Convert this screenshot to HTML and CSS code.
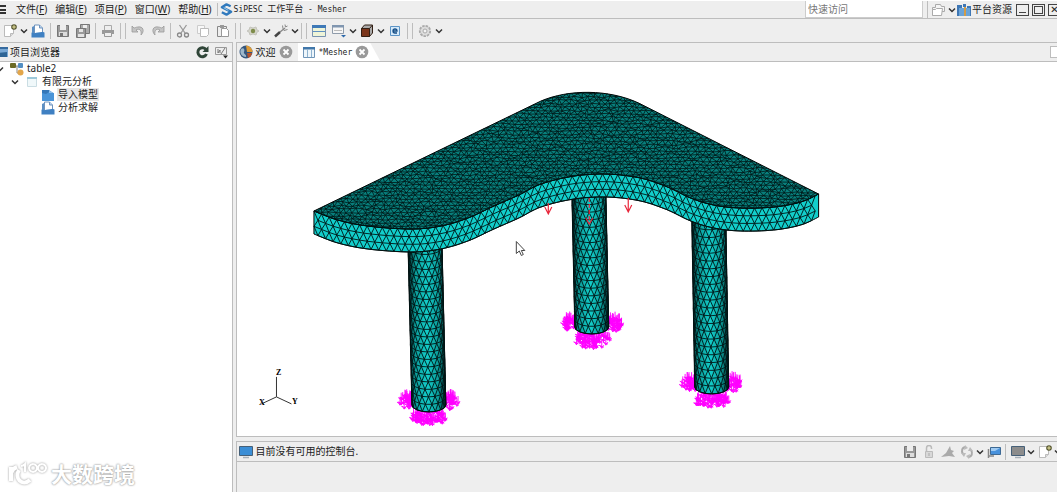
FILE: index.html
```html
<!DOCTYPE html>
<html lang="zh-CN">
<head>
  <meta charset="UTF-8">
  <meta name="viewport" content="width=device-width, initial-scale=1.0">
  <title>SiPESC 工作平台 - Mesher</title>
  <link rel="stylesheet" href="styles.css">
</head>
<body>

  <!-- Shared icons -->
  <svg class="sprite" aria-hidden="true">
    <symbol id="i-chev" viewBox="0 0 8 8"><path d="M1 2.500 4 5.500l3-3" fill="none" stroke="#333" stroke-width="1.500"/></symbol>
    <symbol id="i-new" viewBox="0 0 14 14"><path d="M1.500 1.500h9v8l-3 3h-6z" fill="#fff" stroke="#bbb"/><path d="M7.500 12.500v-3h3" fill="#ddd" stroke="#bbb"/><circle cx="11" cy="3" r="2.800" fill="#55552f"/><path d="M11 1.200v3.600M9.200 3h3.600" stroke="#e8e3a0"/></symbol>
    <symbol id="i-open" viewBox="0 0 14 14"><path d="M1 3l2-1v9H1z" fill="#5b8fc4"/><path d="M3.500 1h5l3 3v6h-8z" fill="#fff" stroke="#6f93bd"/><path d="M8.500 1v3h3" fill="#b9d2ee" stroke="#6f93bd"/><path d="M.5 8.500c4 2 8-1.500 13 0v5H.5z" fill="#3f80c2"/></symbol>
    <symbol id="i-folder" viewBox="0 0 14 14"><path d="M1 2h7l4 3v3H1z" fill="#3577b8"/><path d="M1 5l4 1 3-2 5 1v8H1z" fill="#4a94d8"/><path d="M8 2v3h4" fill="#8fc0ec"/></symbol>
    <symbol id="i-save" viewBox="0 0 14 14"><path d="M1.500 1.500h11v11h-11z" fill="#999" stroke="#777"/><path d="M4 1h6v5H4z" fill="#eee"/><path d="M3 8h8v4H3z" fill="#ddd"/><path d="M4 9h3v3H4z" fill="#777"/></symbol>
    <symbol id="i-saveall" viewBox="0 0 14 14"><path d="M4.500.5h9v9h-9z" fill="#aaa" stroke="#777"/><path d="M7 1h4v3H7z" fill="#eee"/><path d="M.5 4.500h9v9h-9z" fill="#999" stroke="#777"/><path d="M3 5h4v3H3zM2 10h6v3H2z" fill="#e4e4e4"/></symbol>
    <symbol id="i-print" viewBox="0 0 14 14"><path d="M3.500 1.500h7v5h-7z" fill="#eee" stroke="#aaa"/><path d="M1 6h12v4H1z" fill="#999"/><path d="M3.500 8.500h7v4h-7z" fill="#eee" stroke="#999"/></symbol>
    <symbol id="i-undo" viewBox="0 0 14 14"><path d="M1 2v6h6L5 6c3-2 6 0 5 5 4-4 2-9-3-8-2 0-3 1-4 1z" fill="#c4c4c4" stroke="#999" stroke-width=".8"/></symbol>
    <symbol id="i-cut" viewBox="0 0 14 14"><path d="M3.500 1 9 9M10.500 1 5 9" stroke="#999" stroke-width="1.300"/><circle cx="3.500" cy="11" r="2" fill="none" stroke="#888" stroke-width="1.300"/><circle cx="10.500" cy="11" r="2" fill="none" stroke="#888" stroke-width="1.300"/></symbol>
    <symbol id="i-copy" viewBox="0 0 14 14"><path d="M1.500 1.500h7v8h-7z" fill="#f8f8f8" stroke="#ccc"/><path d="M4.500 4.500h8v6l-2 2h-6z" fill="#fff" stroke="#bbb"/></symbol>
    <symbol id="i-paste" viewBox="0 0 14 14"><path d="M1.500 2.500h9v10h-9z" fill="#eee" stroke="#888"/><path d="M4 1h4v3H4z" fill="#999"/><path d="M5.500 4.500h5l2 2v6h-7z" fill="#fff" stroke="#999"/></symbol>
    <symbol id="i-eye" viewBox="0 0 14 14"><path d="M1 7l2-1 1-3 3 1 3-1 1 3 2 1-2 1-1 3-3-1-3 1-1-3z" fill="#d4d5c9" stroke="#c4c4bd"/><circle cx="7" cy="7" r="2.200" fill="#7e8c4a"/></symbol>
    <symbol id="i-wrench" viewBox="0 0 14 14"><path d="M1 12.500 6 8" stroke="#444" stroke-width="2.500"/><path d="M6 8l5-4" stroke="#888" stroke-width="1.500"/><path d="M8.500 1.500l.5 3 1 2 3.500-1M11 .5l.5 2.500 2-1" fill="none" stroke="#888"/></symbol>
    <symbol id="i-form" viewBox="0 0 14 14"><path d="M.5 1.500h13v11H.5z" fill="#eef4d8" stroke="#7893b0"/><path d="M0 1h14v3H0z" fill="#3e79b7"/><path d="M1 7.500h12" stroke="#5f90c4"/></symbol>
    <symbol id="i-form2" viewBox="0 0 14 14"><path d="M.5 1.500h11v8H.5z" fill="#f6f6f6" stroke="#8f9cab"/><path d="M0 1h12v2.500H0z" fill="#8096b0"/><path d="M2 6.500h8" stroke="#bbb"/><path d="M9 11h5l-2.500 2.500z" fill="#2c68aa"/></symbol>
    <symbol id="i-box" viewBox="0 0 14 14"><path d="M1.500 4.500 4.500 1h8v8l-3 3.500z" fill="#aaa" stroke="#332015"/><path d="M1.500 4.500h8v8h-8z" fill="#7b351b" stroke="#332015"/><path d="M9.500 4.500 12.500 1" stroke="#332015"/></symbol>
    <symbol id="i-e" viewBox="0 0 14 14"><path d="M2.500 2.500h9v9h-9z" fill="#d6eafa" stroke="#5c94c6"/><path d="M9 9H7a2 2 0 1 1 2-2H5.500" fill="none" stroke="#174f87" stroke-width="1.300"/></symbol>
    <symbol id="i-gear" viewBox="0 0 14 14"><circle cx="7" cy="7" r="5.200" fill="#ddd" stroke="#aaa" stroke-width="1.800" stroke-dasharray="2.500 1"/><circle cx="7" cy="7" r="2" fill="#f4f4f4" stroke="#aaa"/></symbol>
    <symbol id="i-sync" viewBox="0 0 14 14"><path d="M11 4.500A4.500 4.500 0 1 0 11.500 9" fill="none" stroke="#2f4538" stroke-width="3"/><path d="M13.500 1v6H7.500z" fill="#2f4538"/></symbol>
    <symbol id="i-link" viewBox="0 0 14 14"><path d="M.5 2.500h11v7H.5z" fill="#eee" stroke="#999"/><path d="M3 4v4M3 8l2-3v3M6 9l4-6" fill="none" stroke="#777"/><path d="M8 10.500h5l-2.500 3z" fill="#222"/></symbol>
    <symbol id="i-nav" viewBox="0 0 14 14"><path d="M0 2h12v10H0z" fill="#79a8d4"/><path d="M0 2h12v2H0z" fill="#356a9f"/><path d="M1 8l10-1v5H0z" fill="#2f6595"/></symbol>
    <symbol id="i-tree" viewBox="0 0 14 14"><path d="M5 4h5M7 4v7h3" fill="none" stroke="#888"/><rect x="0" y="1" width="6" height="5" rx="1" fill="#6d6b25"/><rect x="8" y="1" width="5" height="5" rx="1" fill="#548fc3"/><circle cx="10.500" cy="10.500" r="3" fill="#e3a64a"/></symbol>
    <symbol id="i-page" viewBox="0 0 14 14"><path d="M2.500 2.500h9v9h-9z" fill="#f0f8fa" stroke="#cadde3"/><path d="M2 2h10v2H2z" fill="#9cc8da"/></symbol>
    <symbol id="i-globe" viewBox="0 0 14 14"><circle cx="7" cy="7" r="6.500" fill="#35577e"/><path d="M7 .5a6.500 6.500 0 0 1 6.500 6.500H8z" fill="#de9b35"/><path d="M2 4c3-2 4 1 3 3s3 2 2 5C3 12 0 8 2 4z" fill="#9eb7ca"/><path d="M8 8h5a6 6 0 0 1-4 5z" fill="#b5532f"/></symbol>
    <symbol id="i-table" viewBox="0 0 14 14"><path d="M1.500 2.500h11v10h-11z" fill="#eef6fb" stroke="#7196b8"/><path d="M1 2h12v2.500H1z" fill="#4177aa"/><path d="M5.500 4v8M9.500 4v8" stroke="#8eb2cf"/></symbol>
    <symbol id="i-close" viewBox="0 0 14 14"><circle cx="7" cy="7" r="6.300" fill="#999"/><path d="M4.500 4.500l5 5M9.500 4.500l-5 5" stroke="#fff" stroke-width="1.800"/></symbol>
    <symbol id="i-monitor" viewBox="0 0 14 14"><path d="M.5 1.500h13v9H.5z" fill="currentColor" stroke="#466078"/><path d="M4 12.500h6" stroke="#a8b0b8" stroke-width="1.500"/></symbol>
    <symbol id="i-lock" viewBox="0 0 14 14"><path d="M4.500 6V3a2.500 2.500 0 0 1 5 0v1" fill="none" stroke="#bbb" stroke-width="1.500"/><path d="M3.500 6.500h7v6h-7z" fill="#d8d8d8" stroke="#bbb"/><path d="M7 8v3" stroke="#aaa"/></symbol>
    <symbol id="i-pin" viewBox="0 0 14 14"><path d="M0 12 5 8l4-7 1 4 3 1-2 2 3 4-6-1z" fill="#aaa"/></symbol>
    <symbol id="i-swap" viewBox="0 0 14 14"><path d="M6 2C2 2 1 6 3 9M8 12c4 0 5-4 3-7" fill="none" stroke="#aaa" stroke-width="2"/><path d="M5 0l3 3-4 2zM9 14l-3-3 4-2zM1 8h5l-2 4zM13 6H8l2-4z" fill="#bbb"/></symbol>
    <symbol id="i-show" viewBox="0 0 14 14"><path d="M3.500 2.500h10v7h-10z" fill="#4791dc" stroke="#3d6994"/><path d="M1.500 4v9M1 11h6" stroke="#888" stroke-width="1.500"/><path d="M4 3h9l-5 3H4z" fill="#9fcaf2"/></symbol>
    <symbol id="i-persp" viewBox="0 0 14 14"><path d="M1.500 12.500v-8h3V1.500h5l1 2h3v5h-3" fill="#f4f4f4" stroke="#aaa"/><path d="M1.500 12.500v-6h3l1-1h6l-1 7z" fill="#fff" stroke="#aaa"/></symbol>
    <symbol id="i-res" viewBox="0 0 14 14"><path d="M0 2h5v11H0zM6 1h3v3H6zM10 3h4v10h-4z" fill="#3e77b5"/><path d="M2 5h11v8H2z" fill="#6ba4d8"/><path d="M7 4h2v9H7z" fill="#d39c46"/></symbol>
    <symbol id="i-logo" viewBox="0 0 14 14"><path d="M11.500 3.500 7 1.500 2 4.500 12 9.500 7 12.500 2 10" fill="none" stroke="#2f79bd" stroke-width="2.600" stroke-linejoin="round"/><path d="M4 5l5 3" stroke="#9fd0ee"/></symbol>
  </svg>

  <header class="menubar">
    <button class="burger" aria-label="菜单"></button>
    <nav class="menus">
      <button>文件(<u>F</u>)</button>
      <button>编辑(<u>E</u>)</button>
      <button>项目(<u>P</u>)</button>
      <button>窗口(<u>W</u>)</button>
      <button>帮助(<u>H</u>)</button>
    </nav>
    <div class="title">
      <svg class="icon"><use href="#i-logo"/></svg>
      <h1>SiPESC <span>工作平台</span> - Mesher</h1>
    </div>
    <input class="quick" type="text" placeholder="快速访问" aria-label="快速访问">
    <div class="perspective">
      <button class="tool" aria-label="打开透视图"><svg class="icon"><use href="#i-persp"/></svg></button>
      <button class="drop" aria-label="更多透视图"><svg><use href="#i-chev"/></svg></button>
      <button class="res"><svg class="icon"><use href="#i-res"/></svg>平台资源</button>
    </div>
    <div class="winbtns">
      <button class="min" aria-label="最小化"></button>
      <button class="max" aria-label="最大化"></button>
      <button class="cls" aria-label="关闭"></button>
    </div>
  </header>

  <div class="toolbar">
    <button class="tool" aria-label="新建"><svg class="icon"><use href="#i-new"/></svg></button>
    <button class="drop" aria-label="新建菜单"><svg><use href="#i-chev"/></svg></button>
    <button class="tool" aria-label="打开"><svg class="icon"><use href="#i-open"/></svg></button>
    <i class="sep"></i>
    <button class="tool" aria-label="保存"><svg class="icon"><use href="#i-save"/></svg></button>
    <button class="tool" aria-label="全部保存"><svg class="icon"><use href="#i-saveall"/></svg></button>
    <i class="sep"></i>
    <button class="tool" aria-label="打印"><svg class="icon"><use href="#i-print"/></svg></button>
    <i class="sep double"></i>
    <button class="tool" aria-label="撤销"><svg class="icon"><use href="#i-undo"/></svg></button>
    <button class="tool" aria-label="重做"><svg class="icon flip"><use href="#i-undo"/></svg></button>
    <i class="sep"></i>
    <button class="tool" aria-label="剪切"><svg class="icon"><use href="#i-cut"/></svg></button>
    <button class="tool" aria-label="复制"><svg class="icon"><use href="#i-copy"/></svg></button>
    <button class="tool" aria-label="粘贴"><svg class="icon"><use href="#i-paste"/></svg></button>
    <i class="sep double"></i>
    <button class="tool" aria-label="显示"><svg class="icon"><use href="#i-eye"/></svg></button>
    <button class="drop" aria-label="显示菜单"><svg><use href="#i-chev"/></svg></button>
    <button class="tool" aria-label="工具"><svg class="icon"><use href="#i-wrench"/></svg></button>
    <button class="drop" aria-label="工具菜单"><svg><use href="#i-chev"/></svg></button>
    <i class="sep double"></i>
    <button class="tool" aria-label="表单"><svg class="icon"><use href="#i-form"/></svg></button>
    <button class="tool" aria-label="视图"><svg class="icon"><use href="#i-form2"/></svg></button>
    <button class="drop" aria-label="视图菜单"><svg><use href="#i-chev"/></svg></button>
    <button class="tool" aria-label="模型"><svg class="icon"><use href="#i-box"/></svg></button>
    <button class="drop" aria-label="模型菜单"><svg><use href="#i-chev"/></svg></button>
    <button class="tool" aria-label="单元"><svg class="icon"><use href="#i-e"/></svg></button>
    <i class="sep double"></i>
    <button class="tool" aria-label="设置"><svg class="icon"><use href="#i-gear"/></svg></button>
    <button class="drop" aria-label="设置菜单"><svg><use href="#i-chev"/></svg></button>
  </div>

  <main class="workbench">
    <aside class="explorer">
      <div class="explorer-head">
        <svg class="icon"><use href="#i-nav"/></svg>
        <h2>项目浏览器</h2>
        <button class="tool" aria-label="刷新"><svg class="icon"><use href="#i-sync"/></svg></button>
        <button class="tool" aria-label="链接"><svg class="icon"><use href="#i-link"/></svg></button>
      </div>
      <ul class="tree">
        <li>
          <div class="node root"><svg class="arrow"><use href="#i-chev"/></svg><svg class="icon"><use href="#i-tree"/></svg><span>table2</span></div>
          <ul>
            <li>
              <div class="node"><svg class="arrow"><use href="#i-chev"/></svg><svg class="icon"><use href="#i-page"/></svg><span>有限元分析</span></div>
              <ul>
                <li><div class="node leaf"><svg class="icon"><use href="#i-folder"/></svg><span class="selected">导入模型</span></div></li>
                <li><div class="node leaf"><svg class="icon"><use href="#i-open"/></svg><span>分析求解</span></div></li>
              </ul>
            </li>
          </ul>
        </li>
      </ul>
      <div class="watermark">
        <svg viewBox="0 0 40 28"><path d="M3 7v14M3 13c1-3 3-5 6-6M11 10c-5 8 3 17 11 10"/><path class="thin" d="M13 6c2 0 3-1 4-2v8M25 4a4 4 0 1 0 .1 0M34 4a4 4 0 1 0 .1 0"/></svg>
        <span>大数跨境</span>
      </div>
    </aside>

    <section class="right">
      <div class="editor">
        <div class="tabs">
          <button class="tab"><svg class="icon"><use href="#i-globe"/></svg><span>欢迎</span><svg class="icon"><use href="#i-close"/></svg></button>
          <button class="tab active"><svg class="icon"><use href="#i-table"/></svg><span class="mono">*Mesher</span><svg class="icon"><use href="#i-close"/></svg></button>
          <button class="restore" aria-label="还原"></button>
        </div>
        <svg class="scene" viewBox="236 62 821 374" role="img" aria-label="桌子有限元网格">
          <defs>
            <linearGradient id="legFill">
              <stop offset="0" stop-color="#022"/>
              <stop offset=".2" stop-color="#0b9c99"/>
              <stop offset=".5" stop-color="#13ccc9"/>
              <stop offset=".8" stop-color="#0b9c99"/>
              <stop offset="1" stop-color="#022"/>
            </linearGradient>
            <clipPath id="topClip"><path id="topClipPath"/></clipPath>
          </defs>
          <g id="legs"></g>
          <g id="plate"></g>
          <g class="load">
            <path d="M547.500 203v10m-3.500-6l3.500 7 3.500-7M627.500 198v13m-3.500-6l3.500 7 3.500-7"/>
            <path d="M588.500 220v-22" stroke-dasharray="4 2"/>
            <path d="M585 218l3.500 6 3.500-6"/>
          </g>
          <g class="axes">
            <path d="M275.500 377v20l-15 7m15-7 15 7"/>
            <text x="275" y="375">Z</text>
            <text x="258" y="405">X</text>
            <text x="291" y="404">Y</text>
          </g>
          <path class="cursor" d="M515.500 241.500v12l3-2.500 2 4.500 2-1-2-4h3.500z"/>
        </svg>
      </div>

      <div class="console">
        <div class="console-head">
          <svg class="icon blue"><use href="#i-monitor"/></svg>
          <span class="message">目前没有可用的控制台.</span>
          <button class="tool" aria-label="保存日志"><svg class="icon"><use href="#i-save"/></svg></button>
          <button class="tool" aria-label="锁定"><svg class="icon"><use href="#i-lock"/></svg></button>
          <button class="tool" aria-label="固定"><svg class="icon"><use href="#i-pin"/></svg></button>
          <button class="tool" aria-label="切换"><svg class="icon"><use href="#i-swap"/></svg></button>
          <button class="drop" aria-label="切换菜单"><svg><use href="#i-chev"/></svg></button>
          <button class="tool" aria-label="显示控制台"><svg class="icon"><use href="#i-show"/></svg></button>
          <i class="sep"></i>
          <button class="tool" aria-label="控制台"><svg class="icon grey"><use href="#i-monitor"/></svg></button>
          <button class="drop" aria-label="控制台菜单"><svg><use href="#i-chev"/></svg></button>
          <button class="tool" aria-label="新建控制台"><svg class="icon"><use href="#i-new"/></svg></button>
          <button class="drop" aria-label="新建控制台菜单"><svg><use href="#i-chev"/></svg></button>
        </div>
      </div>
    </section>
  </main>

  <script src="mesh.js"></script>
</body>
</html>
```
FILE: styles.css
```css
:root {
  --bg: #eeeeee;
  --line: #bdbdbd;
  --text: #222222;
}

* {
  box-sizing: border-box;
}

body {
  margin: 0;
  height: 100vh;
  display: flex;
  flex-direction: column;
  overflow: hidden;
  background: var(--bg);
  color: var(--text);
  font-family: "Noto Sans", "Noto Sans CJK SC", sans-serif;
  font-size: 10px;
  line-height: 13px;
}

button {
  display: flex;
  align-items: center;
  justify-content: center;
  flex: none;
  margin: 0;
  padding: 0;
  border: 0;
  background: none;
  color: inherit;
  font: inherit;
}

h1,
h2 {
  margin: 0;
  font-size: 10px;
  font-weight: normal;
  white-space: nowrap;
}

.sprite {
  display: none;
}

.icon {
  width: 14px;
  height: 14px;
  flex: none;
}

.flip {
  transform: scaleX(-1);
}

.blue {
  color: #3b8ed6;
}

.grey {
  color: #8c8c8c;
}

.tool {
  width: 20px;
  height: 18px;
}

.drop {
  width: 8px;
  height: 18px;
}

.drop svg,
.arrow {
  width: 8px;
  height: 8px;
  flex: none;
}

.sep {
  width: 5px;
  height: 16px;
  flex: none;
  background: linear-gradient(var(--line), var(--line)) center / 1px 100% no-repeat;
}

.sep.double {
  width: 10px;
  background: none;
}

.sep.double::before {
  content: "";
  display: block;
  width: 4px;
  height: 16px;
  margin: 0 auto;
  border: solid var(--line);
  border-width: 0 1px;
}

/* Menu bar */
.menubar {
  display: flex;
  align-items: center;
  height: 19px;
  flex: none;
  border-top: 1px solid #fff;
  border-bottom: 1px solid var(--line);
}

.burger {
  width: 6px;
  height: 9px;
  border: solid #333;
  border-width: 2px 0;
  background: linear-gradient(#333, #333) center / 100% 2px no-repeat;
}

.menus {
  display: flex;
  gap: 8px;
  margin-left: 10px;
  padding-right: 5px;
  border-right: 1px solid var(--line);
}

.title {
  display: flex;
  align-items: center;
  flex: 1;
  padding-left: 2px;
}

.title .icon {
  width: 13px;
  height: 13px;
}

.title h1 {
  padding-left: 1px;
  font-family: "DejaVu Sans Mono", "Noto Sans CJK SC", monospace;
  font-size: 8px;
}

.title h1 span {
  font-size: 9px;
}

.quick {
  width: 118px;
  height: 17px;
  padding: 0 2px;
  border: 1px solid #ccc;
  border-top: 0;
  background: #fff;
  font: inherit;
}

.quick::placeholder {
  color: #777;
}

.perspective {
  display: flex;
  align-items: center;
  margin-left: 4px;
  border-left: 1px solid var(--line);
}

.res {
  gap: 1px;
  padding-left: 1px;
}

.winbtns {
  display: flex;
  gap: 3px;
  margin: 0 -4px 0 4px;
}

.winbtns button {
  width: 13px;
  height: 12px;
  border: 1px solid #444;
}

.min::before {
  content: "";
  width: 7px;
  height: 6px;
  border-bottom: 1px solid #444;
}

.max::before {
  content: "";
  width: 7px;
  height: 6px;
  border: 1px solid #444;
}

.cls::before {
  content: "✕";
  font-family: "DejaVu Sans", sans-serif;
  font-weight: bold;
}

/* Toolbar */
.toolbar {
  display: flex;
  align-items: center;
  height: 23px;
  flex: none;
}

/* Panels */
.workbench {
  display: flex;
  flex: 1;
  gap: 3px;
  min-height: 0;
}

.explorer {
  position: relative;
  width: 22%;
  flex: none;
  border: solid var(--line);
  border-width: 1px 1px 0 0;
  background: #fff;
}

.explorer-head {
  display: flex;
  align-items: center;
  height: 19px;
  border-bottom: 1px solid var(--line);
  background: var(--bg);
}

.explorer-head > .icon {
  margin-left: -4px;
}

.explorer-head h2 {
  flex: 1;
}

.tree,
.tree ul {
  margin: 0;
  padding: 0;
  list-style: none;
}

.tree ul {
  padding-left: 11px;
}

.tree ul ul {
  padding-left: 30px;
}

.node {
  display: flex;
  align-items: center;
  gap: 6px;
  height: 13px;
}

.node.root {
  margin-left: -4px;
}

.node .icon {
  margin-right: -4px;
}

.node span {
  padding: 0 1px;
}

.node .selected {
  background: #e6e6e6;
}

.watermark {
  position: absolute;
  left: 8px;
  bottom: 4px;
  display: flex;
  align-items: center;
  gap: 3px;
  color: #fff;
  font-size: 21px;
  font-weight: bold;
  line-height: 28px;
  text-shadow: 0 0 2px #999, 0 0 2px #aaa;
}

.watermark svg {
  width: 40px;
  height: 28px;
  fill: none;
  stroke: #fff;
  stroke-width: 4;
  filter: drop-shadow(0 0 1px #999);
}

.watermark .thin {
  stroke-width: 2;
}

.right {
  display: flex;
  flex: 1;
  flex-direction: column;
  gap: 4px;
  min-width: 0;
}

.editor {
  display: flex;
  flex: 1;
  flex-direction: column;
  min-height: 0;
  border: 1px solid var(--line);
  border-right: 0;
  background: #fff;
}

.tabs {
  display: flex;
  height: 19px;
  flex: none;
  border-bottom: 1px solid var(--line);
  background: var(--bg);
}

.tab {
  gap: 3px;
  padding: 0 5px 0 2px;
}

.tab.active {
  padding: 0 11px 0 4px;
  background: #fff;
  clip-path: polygon(0 0, 88% 0, 100% 100%, 0 100%);
}

.mono {
  font-family: "DejaVu Sans Mono", monospace;
  font-size: 8px;
}

.restore {
  width: 10px;
  height: 12px;
  margin: 3px -3px 0 auto;
  border: 1px solid var(--line);
  background: #fff;
}

.console {
  height: 51px;
  flex: none;
  border: solid var(--line);
  border-width: 1px 0 0 1px;
}

.console-head {
  display: flex;
  align-items: center;
  height: 20px;
  margin-right: -5px;
  padding-left: 2px;
  border-bottom: 1px solid var(--line);
}

.console-head .tool {
  width: 19px;
}

.message {
  flex: 1;
  padding-left: 3px;
}

/* Model view */
.scene {
  flex: 1;
  width: 100%;
  min-height: 0;
}

.plate-top {
  fill: #087f7c;
  stroke: #000;
}

.plate-side {
  fill: #12cecb;
  stroke: #000;
}

.mesh {
  fill: none;
  stroke: #001414;
  stroke-width: 0.9;
}

.mesh-top {
  stroke-width: 0.8;
}

.leg {
  fill: url(#legFill);
  stroke: #000;
}

.support {
  fill: none;
  stroke: #ff00ff;
  stroke-width: 0.9;
}

.load path {
  fill: none;
  stroke: #e8283c;
  stroke-width: 1.2;
}

.axes path {
  fill: none;
  stroke: #333;
}

.axes text {
  font-family: "Liberation Serif", serif;
  font-size: 8px;
  font-weight: bold;
}

.cursor {
  fill: #fff;
  stroke: #444;
}
```
FILE: mesh.js
```js
const NS = "http://www.w3.org/2000/svg";
const plate = document.getElementById("plate");
const legs = document.getElementById("legs");

// Front edge of the table top, left to right
const front = [
  [313, 211], [337, 220], [367, 226], [410, 229], [440, 226], [467, 218],
  [493, 206], [518, 195], [540, 184], [573, 176], [607, 174], [640, 178],
  [667, 187], [690, 198], [713, 205], [740, 208], [773, 207], [800, 202], [818, 194]
];
const back = "L818 194L638 103C608 89 568 89 540 101L313 211Z";
const thickness = 23;

let seed = 7;
function rand() {
  seed = (seed * 16807) % 2147483647;
  return seed / 2147483647;
}

function jitter(n) {
  return (rand() - 0.5) * n;
}

function add(parent, d, cls) {
  const path = document.createElementNS(NS, "path");
  path.setAttribute("d", d);
  path.setAttribute("class", cls);
  parent.appendChild(path);
}

function pt(p) {
  return p[0].toFixed(1) + " " + p[1].toFixed(1);
}

// Catmull-Rom through the front points
function sample(steps) {
  const out = [];
  for (let i = 0; i < front.length - 1; i++) {
    const p = [front[Math.max(i - 1, 0)], front[i], front[i + 1], front[Math.min(i + 2, front.length - 1)]];
    for (let s = 0; s < steps; s++) {
      const t = s / steps;
      out.push([0, 1].map(k => 0.5 * (2 * p[1][k] + (p[2][k] - p[0][k]) * t +
        (2 * p[0][k] - 5 * p[1][k] + 4 * p[2][k] - p[3][k]) * t * t +
        (3 * p[1][k] - p[0][k] - 3 * p[2][k] + p[3][k]) * t * t * t)));
    }
  }
  out.push(front[front.length - 1]);
  return out;
}

// Join rows of nodes into triangles
function triangles(rows) {
  let d = "";
  rows.forEach((row, r) => {
    d += "M" + row.map(pt).join("L");
    const next = rows[r + 1];
    if (!next) return;
    row.forEach((p, i) => {
      if (next[i]) d += "M" + pt(p) + "L" + pt(next[i]);
      const j = r % 2 ? i + 1 : i - 1;
      if (next[j]) d += "M" + pt(p) + "L" + pt(next[j]);
    });
  });
  return d;
}

function drawPlate() {
  const curve = sample(8);
  const top = "M" + curve.map(pt).join("L");
  const bottom = curve.map(p => [p[0], p[1] + thickness]).reverse();
  document.getElementById("topClipPath").setAttribute("d", top + back);

  add(plate, top + "L" + bottom.map(pt).join("L") + "Z", "plate-side");
  add(plate, top + back, "plate-top");

  const yAt = x => {
    const i = Math.max(1, curve.findIndex(p => p[0] >= x));
    const a = curve[i - 1], b = curve[i];
    return a[1] + (b[1] - a[1]) * (x - a[0]) / (b[0] - a[0]);
  };

  const side = [];
  for (let r = 0; r < 4; r++) {
    const row = [];
    for (let x = 313 + (r % 2) * 4; x <= 818; x += 7.6) {
      row.push([x, yAt(x) + r * thickness / 3]);
    }
    side.push(row);
  }
  add(plate, triangles(side), "mesh");

  const grid = [];
  for (let r = 0; r < 42; r++) {
    const row = [];
    for (let x = 310 + (r % 2) * 3; x < 824; x += 6) {
      row.push([x + jitter(3), 90 + r * 3.4 + jitter(2)]);
    }
    grid.push(row);
  }
  add(plate, triangles(grid), "mesh mesh-top");
  plate.lastChild.setAttribute("clip-path", "url(#topClip)");
}

function drawSupport(cx, cy) {
  let d = "";
  const lobes = [[-21, -11, 9, 7, 40], [21, -11, 9, 7, 40], [0, 5, 18, 8, 80]];
  lobes.forEach(([dx, dy, rx, ry, n]) => {
    for (let i = 0; i < n; i++) {
      const a = rand() * Math.PI * 2;
      const k = Math.sqrt(rand());
      const x = cx + dx + Math.cos(a) * rx * k;
      const y = cy + dy + Math.sin(a) * ry * k;
      d += `M${pt([x, y - 5])}v8m-2-3l2 3 2-3M${pt([x - 3, y])}l5 2`;
    }
  });
  add(legs, d, "support");
}

function drawLeg(x, y, bx, by) {
  const r = 17;
  drawSupport(bx, by);
  add(legs, `M${x - r} ${y}L${bx - r} ${by - 7}A${r} 7 0 0 0 ${bx + r} ${by - 7}L${x + r} ${y}Z`, "leg");
  const rows = [];
  const count = Math.round((by - y) / 8);
  for (let i = 0; i <= count; i++) {
    const t = i / count;
    const row = [];
    for (let c = 0; c <= 8; c++) {
      const a = Math.min(Math.PI, (c + (i % 2) / 2) / 8 * Math.PI);
      row.push([x + (bx - x) * t - Math.cos(a) * r, y + (by - 7 - y) * t + Math.sin(a) * 7]);
    }
    rows.push(row);
  }
  add(legs, triangles(rows), "mesh");
}

drawLeg(588, 190, 591, 334);
drawLeg(424, 240, 428, 412);
drawLeg(708, 215, 711, 394);
drawPlate();
```
